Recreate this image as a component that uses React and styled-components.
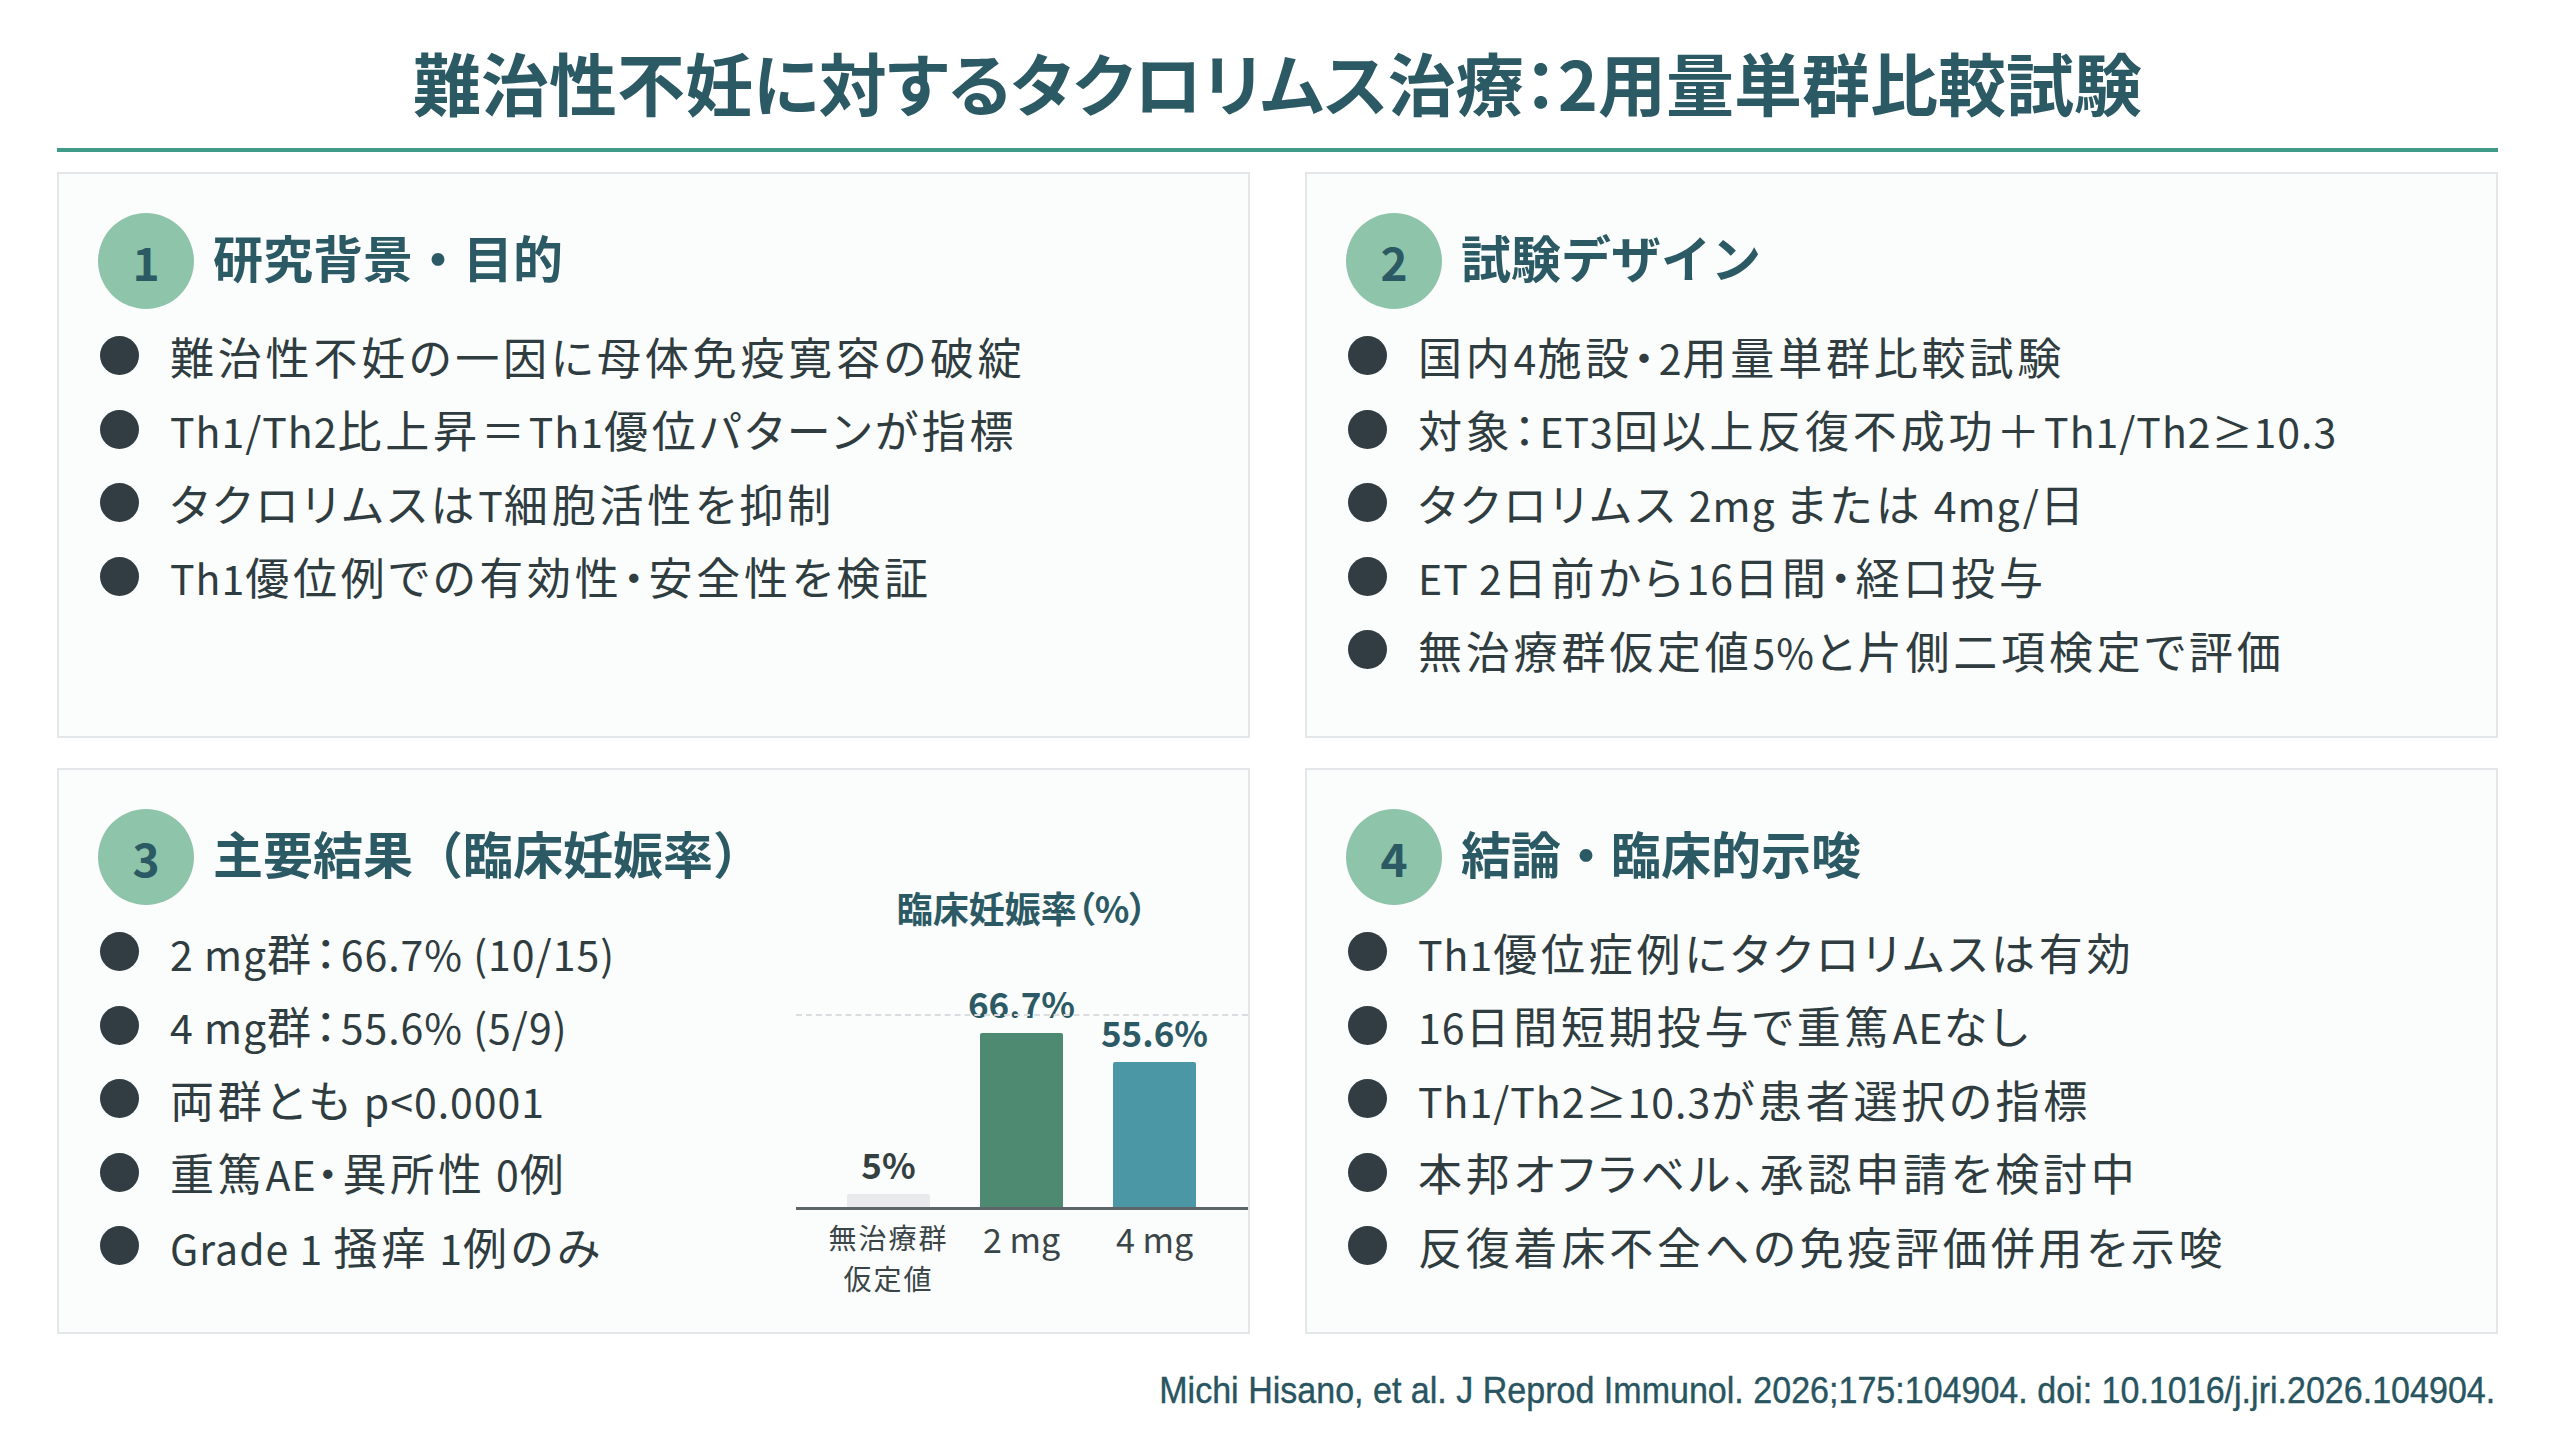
import React from "react";
import styled, { createGlobalStyle } from "styled-components";

const GlobalStyle = createGlobalStyle`
  html, body {
    margin: 0;
    padding: 0;
    background: #ffffff;
  }
  body {
    font-family: "Noto Sans CJK JP", "Noto Sans", sans-serif;
    color: #2f3c40;
  }
`;

const Page = styled.div`
  width: 2560px;
  height: 1440px;
  box-sizing: border-box;
  padding: 41px 62px 0 57px;
  overflow: hidden;
`;

const Title = styled.h1`
  margin: 0;
  font-size: 68px;
  line-height: 82px;
  font-weight: 700;
  text-align: center;
  color: #2c5a64;
  font-feature-settings: "palt";
`;

const Rule = styled.div`
  margin-top: 25px;
  height: 4px;
  background: #3f9a87;
`;

const Grid = styled.div`
  margin-top: 20px;
  display: grid;
  grid-template-columns: 1fr 1fr;
  grid-template-rows: 566px 566px;
  column-gap: 55px;
  row-gap: 30px;
`;

const Card = styled.section`
  box-sizing: border-box;
  border: 2px solid #e3e7ea;
  background: #fbfcfc;
  padding: 39px;
  display: ${(p) => (p.$split ? "grid" : "block")};
  grid-template-columns: 1fr auto;
`;

const CardHeader = styled.div`
  display: flex;
  align-items: center;
  gap: 19px;
`;

const NumBadge = styled.div`
  width: 96px;
  height: 96px;
  border-radius: 50%;
  background: #8ec4aa;
  color: #2c5a64;
  font-size: 46px;
  font-weight: 700;
  display: flex;
  align-items: center;
  justify-content: center;
  flex-shrink: 0;
`;

const Heading = styled.h2`
  margin: 0;
  padding-bottom: 10px;
  font-size: 50px;
  font-weight: 700;
  color: #2c5a64;
  white-space: nowrap;
`;

const List = styled.ul`
  list-style: none;
  margin: 10px 0 0;
  padding: 0;
`;

const Item = styled.li`
  height: 73.5px;
  display: flex;
  align-items: center;
  gap: 31px;
  font-size: 44px;
  color: #2f3c40;
  white-space: nowrap;
  letter-spacing: 3.8px;
  font-feature-settings: "palt";
`;

/* Latin runs are set a little smaller, as in the original slide font */
const Latin = styled.span`
  font-size: 41px;
  letter-spacing: 1px;
`;

const Dot = styled.span`
  width: 39px;
  height: 39px;
  margin-left: 2px;
  border-radius: 50%;
  background: #313d42;
  flex-shrink: 0;
`;

const Chart = styled.div`
  width: 452px;
  align-self: end;
  justify-self: end;
  margin-right: -39px;
  margin-bottom: -6px;
  display: flex;
  flex-direction: column;
`;

const ChartTitle = styled.div`
  text-align: center;
  font-size: 36px;
  line-height: 48px;
  font-weight: 700;
  color: #2c5a64;
  font-feature-settings: "palt";
`;

const Plot = styled.div`
  position: relative;
  height: 279px;
  box-sizing: border-box;
  padding: 0 27px 0 26px;
  border-bottom: 3px solid #5c6669;
  display: grid;
  grid-template-columns: repeat(3, 133px);
  align-items: end;
`;

const GridLine = styled.div`
  position: absolute;
  left: 0;
  right: 0;
  bottom: 191px;
  border-top: 2px dashed #d9dddf;
`;

const BarCol = styled.div`
  display: flex;
  flex-direction: column;
  align-items: center;
  justify-content: flex-end;
`;

const BarValue = styled.div`
  font-size: 35px;
  line-height: 35px;
  font-weight: 700;
  margin-bottom: 13px;
  color: ${(p) => (p.$muted ? "#33403f" : "#2c5a64")};
`;

const Bar = styled.div`
  width: 83px;
  background: ${(p) => p.$color};
  border-radius: 2px 2px 0 0;
`;

const Labels = styled.div`
  padding: 7px 27px 0 26px;
  display: grid;
  grid-template-columns: repeat(3, 133px);
`;

const AxisLabel = styled.div`
  text-align: center;
  color: #3a4548;
  font-size: ${(p) => (p.$small ? "28px" : "34px")};
  line-height: ${(p) => (p.$small ? "41px" : "44px")};
  letter-spacing: ${(p) => (p.$small ? "2px" : "0")};
  white-space: nowrap;
`;

const Footer = styled.div`
  margin-top: 35px;
  text-align: right;
  font-family: "Liberation Sans", Arial, sans-serif;
  font-size: 37px;
  line-height: 44px;
  color: #285560;
  transform: scaleX(0.92);
  transform-origin: right center;
  padding-right: 3px;
  white-space: nowrap;
  -webkit-text-stroke: 0.4px #285560;
`;

const bars = [
  { key: "none", value: 5, color: "#e8eaeb", label: ["無治療群", "仮定値"], muted: true },
  { key: "2mg", value: 66.7, color: "#4e8a72", label: ["2 mg"] },
  { key: "4mg", value: 55.6, color: "#4c97a5", label: ["4 mg"] },
];

const PX_PER_PCT = 2.61;

const sections = [
  {
    n: 1,
    title: "研究背景・目的",
    items: [
      "難治性不妊の一因に母体免疫寛容の破綻",
      "Th1/Th2比上昇＝Th1優位パターンが指標",
      "タクロリムスはT細胞活性を抑制",
      "Th1優位例での有効性・安全性を検証",
    ],
  },
  {
    n: 2,
    title: "試験デザイン",
    items: [
      "国内4施設・2用量単群比較試験",
      "対象：ET3回以上反復不成功＋Th1/Th2≥10.3",
      "タクロリムス 2mg または 4mg/日",
      "ET 2日前から16日間・経口投与",
      "無治療群仮定値5%と片側二項検定で評価",
    ],
  },
  {
    n: 3,
    title: "主要結果（臨床妊娠率）",
    chart: true,
    items: [
      "2 mg群：66.7% (10/15)",
      "4 mg群：55.6% (5/9)",
      "両群とも p<0.0001",
      "重篤AE・異所性 0例",
      "Grade 1 掻痒 1例のみ",
    ],
  },
  {
    n: 4,
    title: "結論・臨床的示唆",
    items: [
      "Th1優位症例にタクロリムスは有効",
      "16日間短期投与で重篤AEなし",
      "Th1/Th2≥10.3が患者選択の指標",
      "本邦オフラベル、承認申請を検討中",
      "反復着床不全への免疫評価併用を示唆",
    ],
  },
];

// split a line into Japanese and Latin runs
const LATIN_RUN = /([\x20-\x7E≥]+)/;

const Runs = ({ text }) =>
  text
    .split(LATIN_RUN)
    .map((part, i) =>
      part === "" ? null : i % 2 === 1 ? <Latin key={i}>{part}</Latin> : <span key={i}>{part}</span>
    );

const RateChart = () => (
  <Chart>
    <ChartTitle>臨床妊娠率（%）</ChartTitle>
    <Plot>
      <GridLine />
      {bars.map((b) => (
        <BarCol key={b.key}>
          <BarValue $muted={b.muted}>{b.value}%</BarValue>
          <Bar $color={b.color} style={{ height: `${b.value * PX_PER_PCT}px` }} />
        </BarCol>
      ))}
    </Plot>
    <Labels>
      {bars.map((b) => (
        <AxisLabel key={b.key} $small={b.label.length > 1}>
          {b.label.map((l) => (
            <div key={l}>{l}</div>
          ))}
        </AxisLabel>
      ))}
    </Labels>
  </Chart>
);

const Section = ({ n, title, items, chart }) => (
  <Card $split={chart}>
    <div>
      <CardHeader>
        <NumBadge>{n}</NumBadge>
        <Heading>{title}</Heading>
      </CardHeader>
      <List>
        {items.map((t) => (
          <Item key={t}>
            <Dot />
            <span>
              <Runs text={t} />
            </span>
          </Item>
        ))}
      </List>
    </div>
    {chart && <RateChart />}
  </Card>
);

const App = () => (
  <Page>
    <GlobalStyle />
    <Title>難治性不妊に対するタクロリムス治療：2用量単群比較試験</Title>
    <Rule />
    <Grid>
      {sections.map((s) => (
        <Section key={s.n} {...s} />
      ))}
    </Grid>
    <Footer>
      Michi Hisano, et al. J Reprod Immunol. 2026;175:104904. doi: 10.1016/j.jri.2026.104904.
    </Footer>
  </Page>
);

export default App;
